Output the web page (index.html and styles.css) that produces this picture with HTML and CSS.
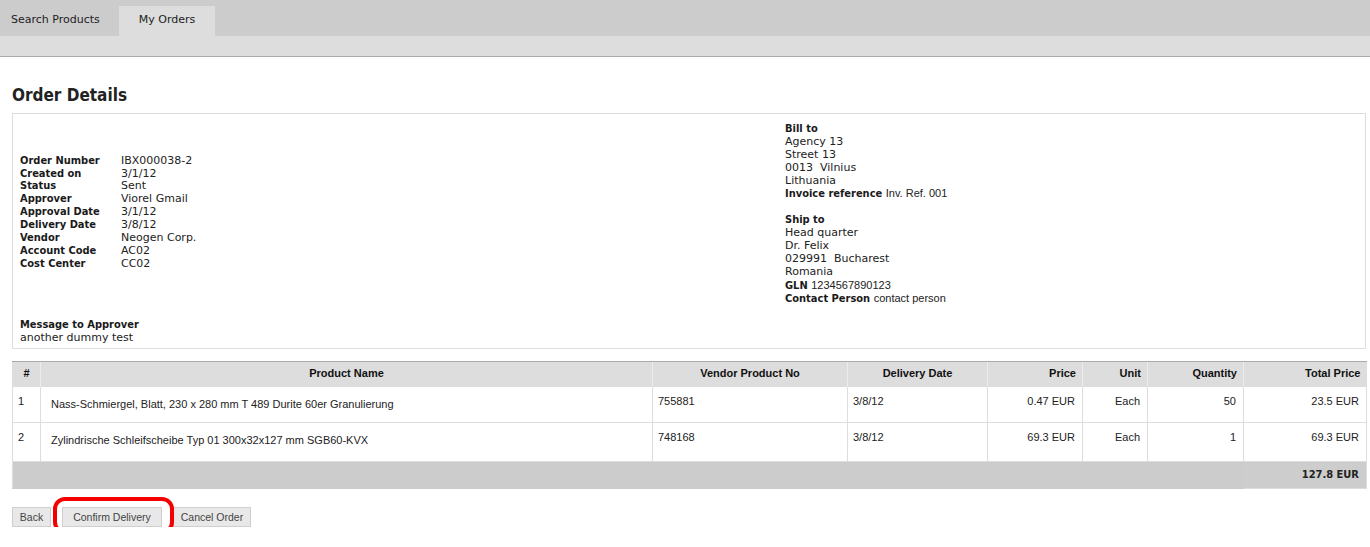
FILE: index.html
```html
<!DOCTYPE html>
<html lang="en">
<head>
<meta charset="utf-8">
<title>Order Details</title>
<link rel="stylesheet" href="styles.css">
</head>
<body>
<nav class="tabs">
  <a class="tab tab-first" href="#">Search Products</a>
  <a class="tab tab-active" href="#">My Orders</a>
</nav>
<div class="subbar"></div>
<main class="page">
  <h1 class="title">Order Details</h1>
  <section class="info">
    <div class="info-top">
      <dl class="details">
        <dt>Order Number</dt><dd>IBX000038-2</dd>
        <dt>Created on</dt><dd>3/1/12</dd>
        <dt>Status</dt><dd>Sent</dd>
        <dt>Approver</dt><dd>Viorel Gmail</dd>
        <dt>Approval Date</dt><dd>3/1/12</dd>
        <dt>Delivery Date</dt><dd>3/8/12</dd>
        <dt>Vendor</dt><dd>Neogen Corp.</dd>
        <dt>Account Code</dt><dd>AC02</dd>
        <dt>Cost Center</dt><dd>CC02</dd>
      </dl>
      <div class="addresses">
        <div class="lbl">Bill to</div>
        <div>Agency 13</div>
        <div>Street 13</div>
        <div>0013&nbsp; Vilnius</div>
        <div>Lithuania</div>
        <div><span class="lbl">Invoice reference</span> <span class="arial">Inv. Ref. 001</span></div>
        <div class="blank"></div>
        <div class="lbl">Ship to</div>
        <div>Head quarter</div>
        <div>Dr. Felix</div>
        <div>029991&nbsp; Bucharest</div>
        <div>Romania</div>
        <div><span class="lbl">GLN</span> <span class="arial">1234567890123</span></div>
        <div><span class="lbl">Contact Person</span>&nbsp;<span class="arial">contact person</span></div>
      </div>
    </div>
    <div class="message">
      <div class="lbl">Message to Approver</div>
      <div>another dummy test</div>
    </div>
  </section>

  <table class="items">
    <colgroup>
      <col class="c-num"><col class="c-name"><col class="c-vno"><col class="c-date">
      <col class="c-price"><col class="c-unit"><col class="c-qty"><col class="c-total">
    </colgroup>
    <thead>
      <tr>
        <th class="ctr">#</th>
        <th class="ctr">Product Name</th>
        <th class="ctr">Vendor Product No</th>
        <th class="ctr">Delivery Date</th>
        <th class="num">Price</th>
        <th class="num">Unit</th>
        <th class="num">Quantity</th>
        <th class="num">Total Price</th>
      </tr>
    </thead>
    <tbody>
      <tr class="row-1">
        <td>1</td>
        <td class="pname">Nass-Schmiergel, Blatt, 230 x 280 mm T 489 Durite 60er Granulierung</td>
        <td>755881</td>
        <td>3/8/12</td>
        <td class="num">0.47 EUR</td>
        <td class="num">Each</td>
        <td class="num">50</td>
        <td class="num">23.5 EUR</td>
      </tr>
      <tr class="row-2">
        <td>2</td>
        <td class="pname">Zylindrische Schleifscheibe Typ 01 300x32x127 mm SGB60-KVX</td>
        <td>748168</td>
        <td>3/8/12</td>
        <td class="num">69.3 EUR</td>
        <td class="num">Each</td>
        <td class="num">1</td>
        <td class="num">69.3 EUR</td>
      </tr>
    </tbody>
    <tfoot>
      <tr>
        <td colspan="7" class="foot-fill"></td>
        <td class="foot-total">127.8 EUR</td>
      </tr>
    </tfoot>
  </table>

  <div class="actions">
    <button class="btn btn-back" type="button">Back</button>
    <span class="highlight"><button class="btn btn-confirm" type="button">Confirm Delivery</button></span>
    <button class="btn btn-cancel" type="button">Cancel Order</button>
  </div>
</main>
</body>
</html>
```
FILE: styles.css
```css
* { box-sizing: border-box; }

body {
  margin: 0;
  background: #fff;
  color: #222;
  font-family: "DejaVu Sans", Verdana, sans-serif;
  font-size: 11px;
}

/* top tabs */
.tabs {
  height: 36px;
  background: #ccc;
  display: flex;
  align-items: flex-end;
}
.tab {
  height: 30px;
  line-height: 28px;
  color: #222;
  text-decoration: none;
  white-space: nowrap;
}
.tab-first { width: 119px; padding-left: 11px; }
.tab-active { width: 96px; background: #ddd; text-align: center; }

.subbar {
  height: 21px;
  background: #ddd;
  border-bottom: 1px solid #aaa;
}

.page { padding: 0 4px 0 12px; }

.title {
  margin: 28px 0 8px;
  font-family: "DejaVu Sans Condensed", "DejaVu Sans", sans-serif;
  font-stretch: condensed;
  font-weight: bold;
  font-size: 17px;
  line-height: 20px;
  color: #222;
}

.lbl, .details dt {
  font-family: "DejaVu Sans Condensed", "DejaVu Sans", sans-serif;
  font-stretch: condensed;
  font-weight: bold;
  color: #1a1a1a;
}
.arial {
  font-family: "Liberation Sans", Arial, sans-serif;
  font-size: 11px;
}

/* info box */
.info {
  border: 1px solid #ddd;
  padding: 9px 7px 3px;
  line-height: 12.875px;
}
.info-top {
  display: grid;
  grid-template-columns: 765px 1fr;
  align-items: center;
}
.details {
  margin: 0 0 4px;
  display: grid;
  grid-template-columns: 101px 1fr;
}
.details dd { margin: 0; }
.blank { height: 12.875px; }
.message { margin-top: 13px; }

/* items table */
.items {
  margin-top: 12px;
  width: 100%;
  table-layout: fixed;
  border-collapse: collapse;
  font-family: "Liberation Sans", Arial, sans-serif;
  font-size: 11px;
  color: #222;
}
.c-num { width: 28px; }
.c-name { width: 612px; }
.c-vno { width: 195px; }
.c-date { width: 140px; }
.c-price { width: 95px; }
.c-unit { width: 65px; }
.c-qty { width: 96px; }
.c-total { width: 123px; }

.items th {
  height: 25px;
  padding: 0 6px 2px;
  background: #ddd;
  border-top: 1px solid #aaa;
  border-left: 1px solid #ececec;
  font-weight: bold;
  color: #111;
}
.items th:first-child { border-left: 1px solid #ddd; }
.items th.ctr { text-align: center; }
.items th.num { text-align: right; }

.items td {
  vertical-align: top;
  padding: 7px 6px 0 5px;
  border: 1px solid #ddd;
  line-height: 14px;
}
.items td.num { text-align: right; padding-right: 7px; }
.items td.pname { padding-top: 10px; padding-left: 10px; }
.row-1 { height: 36px; }
.row-2 { height: 39px; }

.items tfoot td {
  height: 27px;
  vertical-align: middle;
  background: #ccc;
  padding: 0 7px 0 5px;
}
.items .foot-fill { border-color: #ccc; border-left-color: #ddd; }
.items .foot-total {
  background: #cdcdcd;
  border: 1px solid #ddd;
  text-align: right;
  font-family: "DejaVu Sans Condensed", "DejaVu Sans", sans-serif;
  font-stretch: condensed;
  font-weight: bold;
  color: #222;
}

/* buttons */
.actions {
  margin-top: 18px;
  display: flex;
  align-items: center;
  gap: 11px;
}
.btn {
  height: 20px;
  margin: 0;
  padding: 0;
  border: 1px solid #cfcfcf;
  background: #e8e8e8;
  color: #444;
  font-family: "Liberation Sans", Arial, sans-serif;
  font-size: 10.5px;
  line-height: 18px;
  text-align: center;
}
.btn-back { width: 39px; }
.btn-confirm { width: 100px; }
.btn-cancel { width: 78px; }

.highlight {
  position: relative;
  display: flex;
}
.highlight::after {
  content: "";
  position: absolute;
  top: -10px;
  left: -9px;
  right: -12px;
  bottom: -7px;
  border: 4px solid #f40000;
  border-radius: 12px;
  pointer-events: none;
}
```
